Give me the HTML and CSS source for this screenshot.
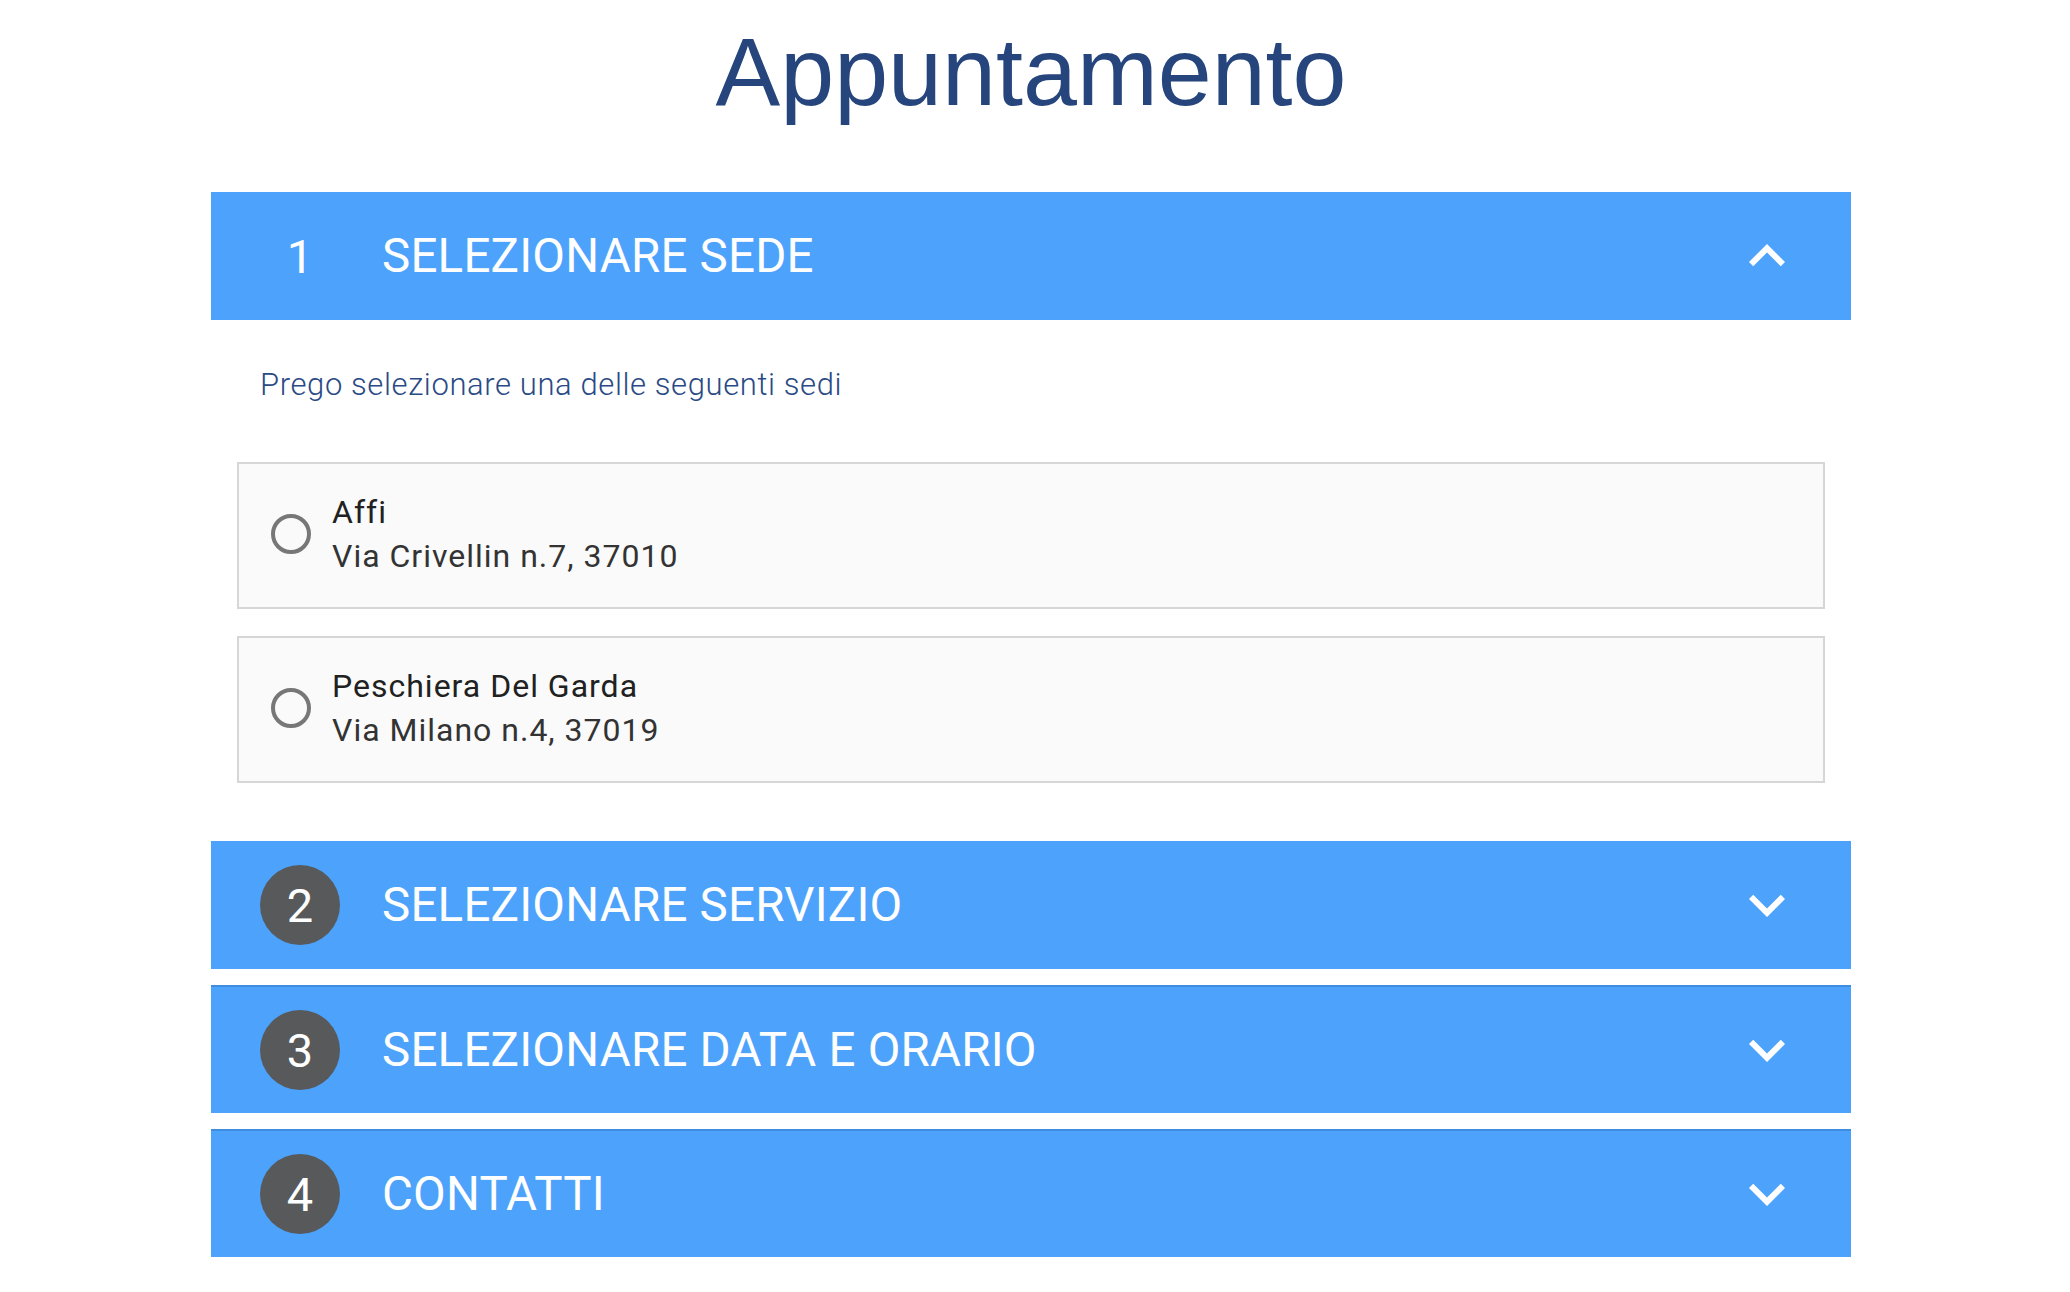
FILE: index.html
```html
<!DOCTYPE html>
<html lang="it">
<head>
    <meta charset="UTF-8">
    <meta name="viewport" content="width=device-width, initial-scale=1.0">
    <title>Appuntamento</title>
    <link rel="stylesheet" href="styles.css">
</head>
<body>

<div id="booking">
    <h1>Appuntamento</h1>

    <!-- Step 1: open -->
    <div class="step step-open">
        <div class="step-head">
            <span class="step-num">1</span>
            <span class="step-title">SELEZIONARE SEDE</span>
            <svg class="chevron" viewBox="0 0 24 24"><path d="M7.41 15.41L12 10.83l4.59 4.58L18 14l-6-6-6 6z"/></svg>
        </div>
        <div class="step-body">
            <p class="intro">Prego selezionare una delle seguenti sedi</p>

            <label class="place">
                <input type="radio" name="sede" value="affi">
                <span class="place-text">
                    <span class="place-name">Affi</span>
                    <span class="place-addr">Via Crivellin n.7, 37010</span>
                </span>
            </label>

            <label class="place">
                <input type="radio" name="sede" value="peschiera">
                <span class="place-text">
                    <span class="place-name">Peschiera Del Garda</span>
                    <span class="place-addr">Via Milano n.4, 37019</span>
                </span>
            </label>
        </div>
    </div>

    <!-- Closed steps -->
    <div class="step">
        <div class="step-head">
            <span class="step-num badge">2</span>
            <span class="step-title">SELEZIONARE SERVIZIO</span>
            <svg class="chevron" viewBox="0 0 24 24"><path d="M16.59 8.59L12 13.17 7.41 8.59 6 10l6 6 6-6z"/></svg>
        </div>
    </div>

    <div class="step">
        <div class="step-head edge">
            <span class="step-num badge">3</span>
            <span class="step-title">SELEZIONARE DATA E ORARIO</span>
            <svg class="chevron" viewBox="0 0 24 24"><path d="M16.59 8.59L12 13.17 7.41 8.59 6 10l6 6 6-6z"/></svg>
        </div>
    </div>

    <div class="step">
        <div class="step-head edge">
            <span class="step-num badge">4</span>
            <span class="step-title">CONTATTI</span>
            <svg class="chevron" viewBox="0 0 24 24"><path d="M16.59 8.59L12 13.17 7.41 8.59 6 10l6 6 6-6z"/></svg>
        </div>
    </div>
</div>

</body>
</html>
```

FILE: styles.css
```css
body {
    font-family: Roboto, 'Liberation Sans', sans-serif;
    background-color: #fff;
    margin: 0;
    padding: 0;
}

#booking {
    width: 1640px;
    margin: 0 219px 0 211px;
    padding-bottom: 34px;
}

h1 {
    font-family: 'Liberation Sans', Arial, sans-serif;
    font-weight: normal;
    font-size: 97px;
    line-height: 110px;
    color: #26457d;
    text-align: center;
    margin: 17px 0 65px;
}

.step {
    margin-bottom: 16px;
}

.step-open {
    margin-bottom: 0;
}

.step-head {
    display: flex;
    align-items: center;
    box-sizing: border-box;
    height: 128px;
    padding: 0 48px 0 49px;
    background-color: #4da2fb;
    color: #fff;
}

/* darker line where two closed steps meet */
.step-head.edge {
    border-top: 2px solid #3f8de0;
}

.step-num {
    width: 80px;
    height: 80px;
    border-radius: 50%;
    display: flex;
    align-items: center;
    justify-content: center;
    font-size: 47px;
    margin-right: 42px;
    flex-shrink: 0;
}

.step-num.badge {
    background-color: #58595b;
}

.step-title {
    font-size: 47.5px;
    letter-spacing: 0.2px;
}

.chevron {
    width: 72px;
    height: 72px;
    margin-left: auto;
    fill: #fff;
}

.step-body {
    padding: 47px 26px 58px;
}

.intro {
    margin: 0 0 59px 23px;
    font-size: 31px;
    font-weight: 300;
    line-height: 36px;
    letter-spacing: 0.6px;
    color: #2a4a85;
}

.place {
    display: flex;
    align-items: center;
    box-sizing: border-box;
    height: 147px;
    padding: 0 0 4px 32px;
    margin-bottom: 27px;
    background-color: #fafafa;
    border: 2px solid #d6d6d6;
    cursor: pointer;
}

.place:last-child {
    margin-bottom: 0;
}

.place input[type="radio"] {
    appearance: none;
    -webkit-appearance: none;
    width: 40px;
    height: 40px;
    margin: 0 21px 0 0;
    border: 4px solid #777;
    border-radius: 50%;
    box-sizing: border-box;
    flex-shrink: 0;
}

.place-text {
    display: flex;
    flex-direction: column;
    font-size: 32px;
    line-height: 44px;
    letter-spacing: 1px;
}

.place-name {
    color: #212121;
}

.place-addr {
    color: #333;
}
```
